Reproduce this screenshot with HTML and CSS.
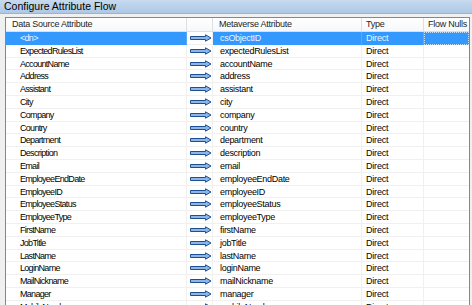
FILE: index.html
```html
<!DOCTYPE html>
<html lang="en">
<head>
    <meta charset="UTF-8">
    <title>Configure Attribute Flow</title>
    <link rel="stylesheet" href="styles.css">
</head>
<body>
    <div class="window">
        <div class="titlebar">Configure Attribute Flow</div>

        <div class="panel">
            <div class="listview">
                <div class="row header">
                    <div class="cell src">Data Source Attribute</div>
                    <div class="cell arrow"></div>
                    <div class="cell mv">Metaverse Attribute</div>
                    <div class="cell type">Type</div>
                    <div class="cell nulls">Flow Nulls</div>
                </div>

                <div id="rows"></div>
            </div>
        </div>
    </div>

    <script>
    const flows = [
        ["<dn>", "csObjectID"],
        ["ExpectedRulesList", "expectedRulesList"],
        ["AccountName", "accountName"],
        ["Address", "address"],
        ["Assistant", "assistant"],
        ["City", "city"],
        ["Company", "company"],
        ["Country", "country"],
        ["Department", "department"],
        ["Description", "description"],
        ["Email", "email"],
        ["EmployeeEndDate", "employeeEndDate"],
        ["EmployeeID", "employeeID"],
        ["EmployeeStatus", "employeeStatus"],
        ["EmployeeType", "employeeType"],
        ["FirstName", "firstName"],
        ["JobTitle", "jobTitle"],
        ["LastName", "lastName"],
        ["LoginName", "loginName"],
        ["MailNickname", "mailNickname"],
        ["Manager", "manager"],
        ["MobileNumber", "mobileNumber"]
    ];

    // blue "flows into" arrow, same for every row
    const arrowSvg = '<svg width="22" height="8" viewBox="0 0 22 8">' +
        '<path d="M0.5,2.5 H15.5 V0.8 L21,4 L15.5,7.2 V5.5 H0.5 Z" fill="#8db6e6" stroke="#1d4f93" stroke-width="1"/>' +
        '</svg>';

    const rowsEl = document.getElementById("rows");

    flows.forEach(function (flow, i) {
        const row = document.createElement("div");
        row.className = i === 0 ? "row selected" : "row";

        const src = document.createElement("div");
        src.className = "cell src";
        src.textContent = flow[0];

        const arrow = document.createElement("div");
        arrow.className = "cell arrow";
        arrow.innerHTML = arrowSvg;

        const mv = document.createElement("div");
        mv.className = "cell mv";
        mv.textContent = flow[1];

        const type = document.createElement("div");
        type.className = "cell type";
        type.textContent = "Direct";

        const nulls = document.createElement("div");
        nulls.className = "cell nulls";

        row.append(src, arrow, mv, type, nulls);
        rowsEl.appendChild(row);
    });
    </script>
</body>
</html>
```

FILE: styles.css
```css
body {
    margin: 0;
    padding: 0;
    font-family: "Liberation Sans", Arial, sans-serif;
    background-color: #f0f0f0;
}

.window {
    width: 472px;
    height: 305px;
    overflow: hidden;
    background-color: #f0f0f0;
}

.titlebar {
    height: 13px;
    line-height: 13px;
    padding-left: 4px;
    font-size: 10.5px;
    color: #000;
    background: linear-gradient(#c6daf0, #aec8e4);
    border-bottom: 1px solid #9db4cf;
}

.panel {
    padding: 3px 2px 0 5px;
}

.listview {
    background-color: #fff;
    border: 1px solid #828790;
    border-bottom: none;
    height: 300px;
    overflow: hidden;
}

.row {
    display: grid;
    grid-template-columns: 181px 26px 149px 62px 1fr;
    height: 12.8px;
    font-size: 9px;
    line-height: 12px;
    color: #000;
}

.cell {
    box-sizing: border-box;
    height: 100%;
    border-right: 1px solid #f0f0f0;
    border-bottom: 1px solid #f0f0f0;
    white-space: nowrap;
    overflow: hidden;
}

.src {
    padding-left: 14px;
    letter-spacing: -0.7px;
}

.arrow {
    padding-left: 3px;
    padding-top: 2px;
}

.arrow svg {
    display: block;
}

.mv {
    padding-left: 7px;
    letter-spacing: -0.3px;
}

.type {
    padding-left: 4px;
    letter-spacing: -0.2px;
}

.nulls {
    padding-left: 4px;
    border-right: none;
}

.header {
    height: 14px;
    background: linear-gradient(#ffffff, #f6f7f9);
}

.header .cell {
    line-height: 13px;
    border-right: 1px solid #dcdfe4;
    border-bottom: 1px solid #dcdfe4;
    letter-spacing: -0.25px;
    color: #1e1e1e;
}

.header .src {
    padding-left: 6px;
}

.header .mv {
    padding-left: 6px;
}

.header .nulls {
    border-right: none;
}

.selected .cell {
    background-color: #3399ff;
    color: #eaf4ff;
    border-right-color: #5aa9f7;
    border-bottom-color: #3399ff;
}

.selected .arrow {
    background-color: #fff;
    border-right-color: #f0f0f0;
    border-bottom-color: #f0f0f0;
}

.selected .nulls {
    outline: 1px dotted #c4e0ff;
    outline-offset: -1px;
}
```
